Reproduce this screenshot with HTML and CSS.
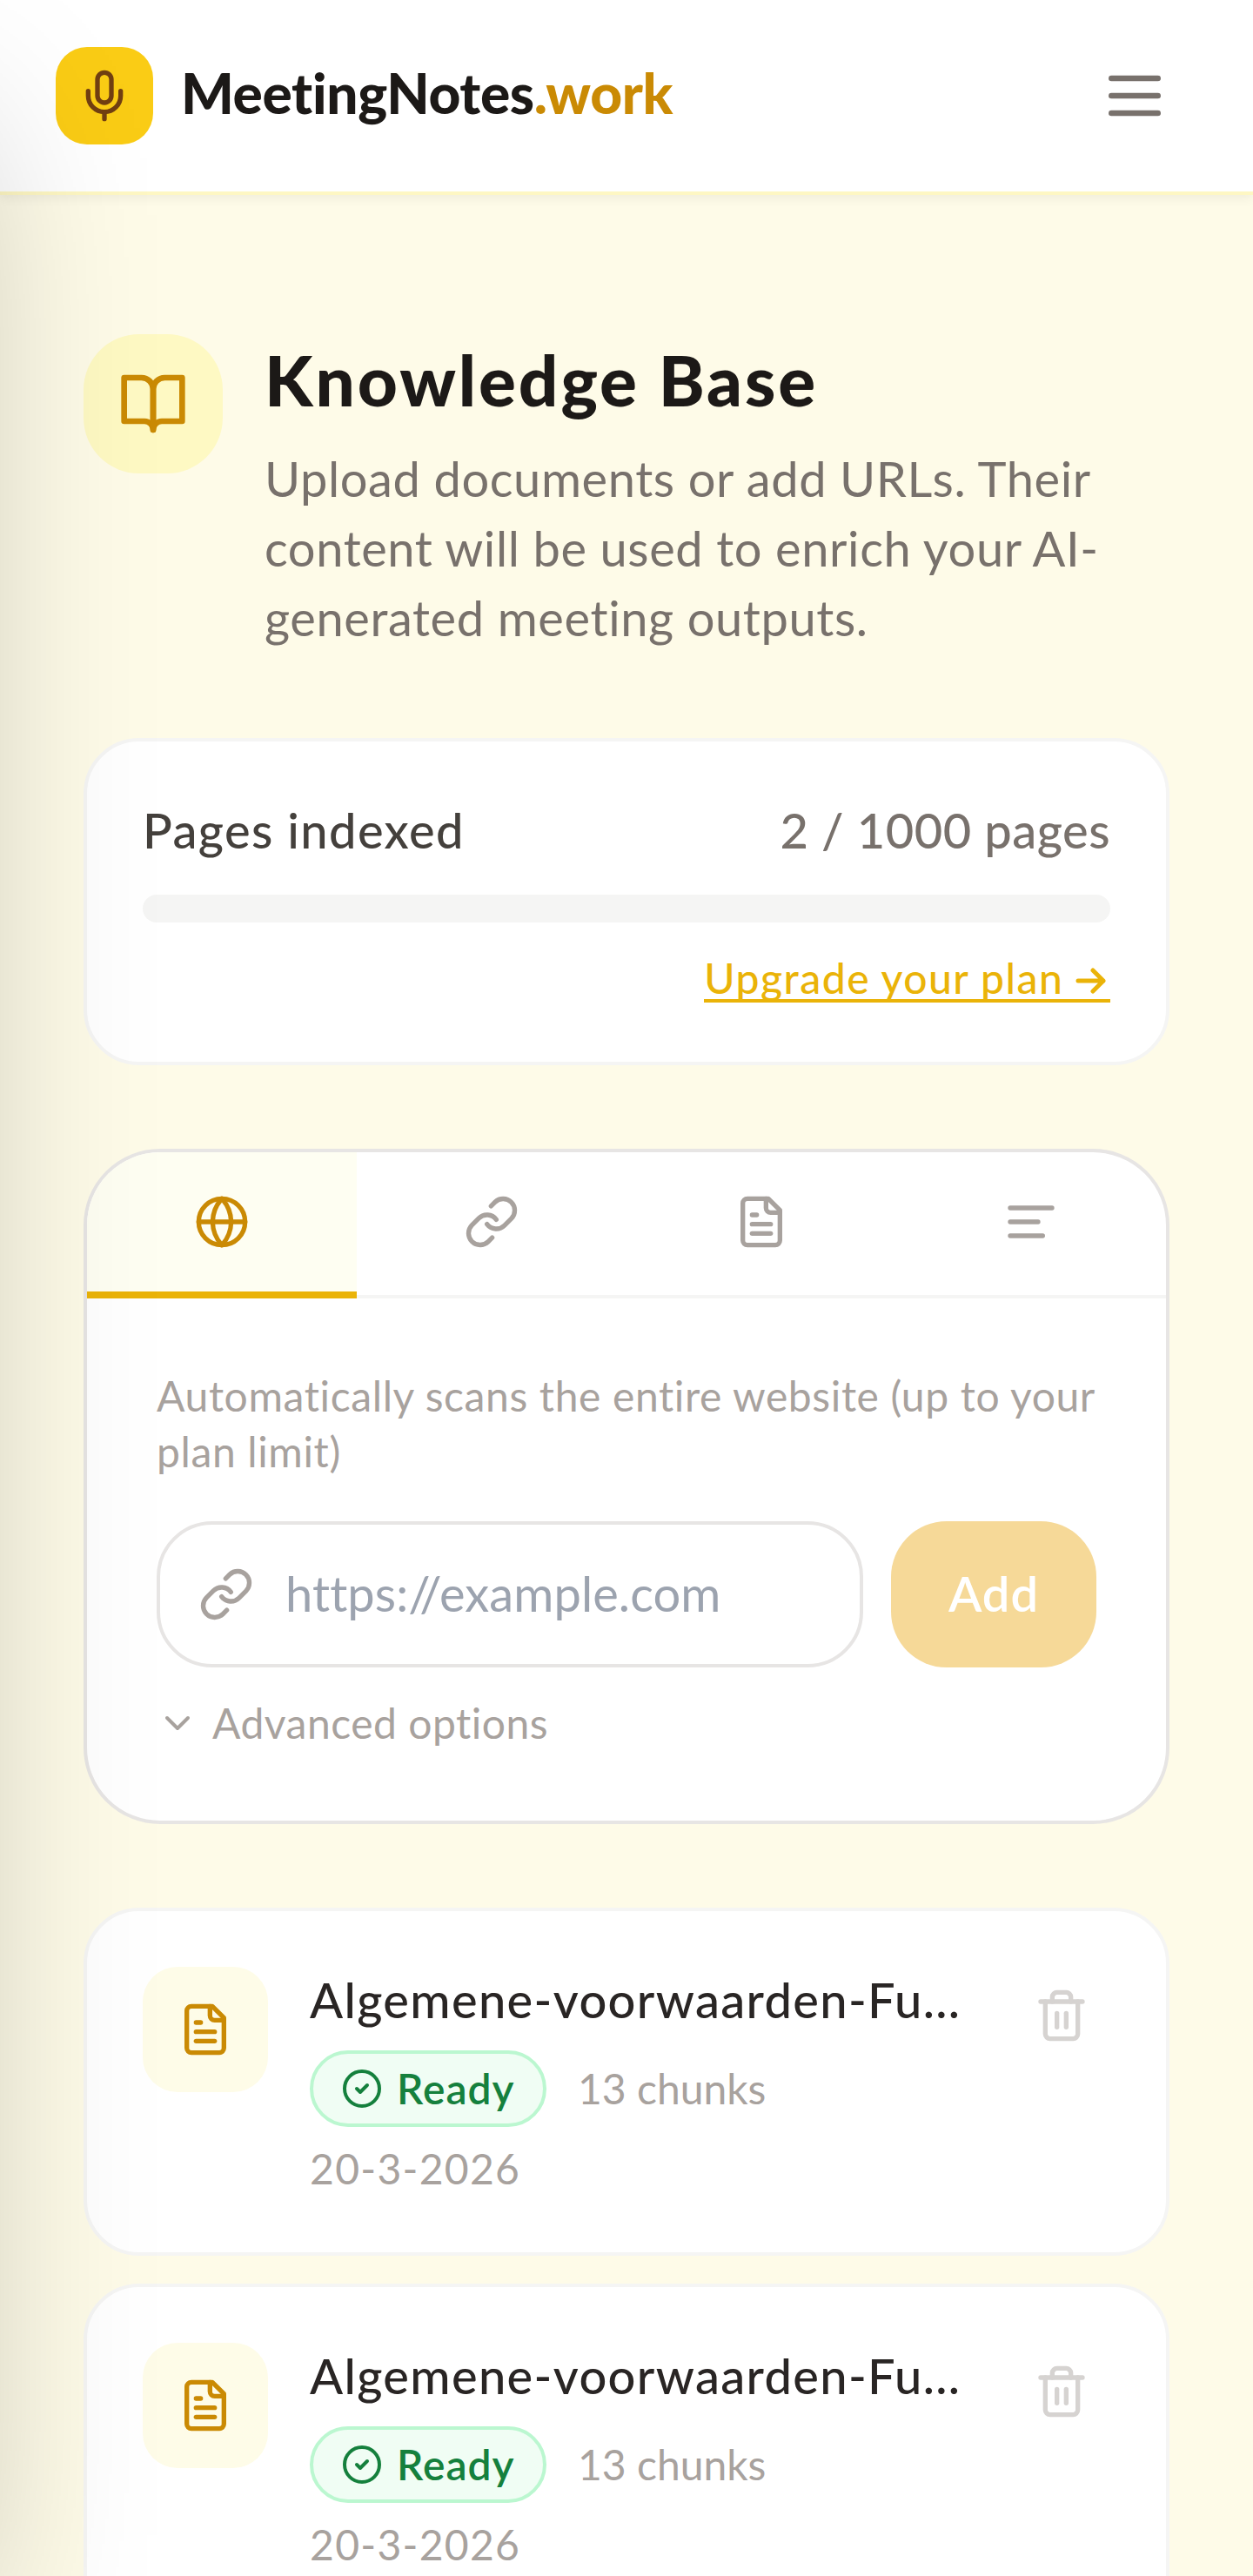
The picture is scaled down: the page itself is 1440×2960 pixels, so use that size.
FILE: index.html
```html
<!DOCTYPE html>
<html lang="en">
<head>
    <meta charset="UTF-8">
    <meta name="viewport" content="width=device-width, initial-scale=1.0">
    <title>Knowledge Base - MeetingNotes.work</title>
    <link rel="stylesheet" href="styles.css">
</head>
<body>
    <!-- shared icons -->
    <svg class="sprite" aria-hidden="true">
        <symbol id="icon-link" viewBox="0 0 24 24">
            <path d="M10 13a5 5 0 0 0 7.54.54l3-3a5 5 0 0 0-7.07-7.07l-1.72 1.71"/>
            <path d="M14 11a5 5 0 0 0-7.54-.54l-3 3a5 5 0 0 0 7.07 7.07l1.71-1.71"/>
        </symbol>
        <symbol id="icon-file" viewBox="0 0 24 24">
            <path d="M15 2H6a2 2 0 0 0-2 2v16a2 2 0 0 0 2 2h12a2 2 0 0 0 2-2V7Z"/>
            <path d="M14 2v4a2 2 0 0 0 2 2h4"/>
            <path d="M10 9H8"/>
            <path d="M16 13H8"/>
            <path d="M16 17H8"/>
        </symbol>
        <symbol id="icon-check" viewBox="0 0 24 24">
            <circle cx="12" cy="12" r="10"/>
            <path d="m9 12 2 2 4-4"/>
        </symbol>
        <symbol id="icon-trash" viewBox="0 0 24 24">
            <path d="M3 6h18"/>
            <path d="M19 6v14c0 1-1 2-2 2H7c-1 0-2-1-2-2V6"/>
            <path d="M8 6V4c0-1 1-2 2-2h4c1 0 2 1 2 2v2"/>
            <path d="M10 11v6"/>
            <path d="M14 11v6"/>
        </symbol>
    </svg>

    <aside class="sidebar"></aside>

    <header class="topbar">
        <a class="brand" href="#">
            <span class="brand-logo">
                <svg class="icon" viewBox="0 0 24 24">
                    <path d="M12 2a3 3 0 0 0-3 3v7a3 3 0 0 0 6 0V5a3 3 0 0 0-3-3Z"/>
                    <path d="M19 10v2a7 7 0 0 1-14 0v-2"/>
                    <path d="M12 19v3"/>
                </svg>
            </span>
            <span class="brand-name">MeetingNotes<span class="brand-tld">.work</span></span>
        </a>
        <button class="menu-btn" aria-label="Menu">
            <svg class="icon icon-lg" viewBox="0 0 24 24">
                <path d="M4 6h16"/>
                <path d="M4 12h16"/>
                <path d="M4 18h16"/>
            </svg>
        </button>
    </header>

    <main>
        <div class="page-head">
            <div class="page-icon">
                <svg class="icon icon-lg" viewBox="0 0 24 24">
                    <path d="M2 3h6a4 4 0 0 1 4 4v14a3 3 0 0 0-3-3H2z"/>
                    <path d="M22 3h-6a4 4 0 0 0-4 4v14a3 3 0 0 1 3-3h7z"/>
                </svg>
            </div>
            <div>
                <h1>Knowledge Base</h1>
                <p class="intro">Upload documents or add URLs. Their<br>content will be used to enrich your AI-<br>generated meeting outputs.</p>
            </div>
        </div>

        <section class="card usage">
            <div class="usage-row">
                <span class="usage-label">Pages indexed</span>
                <span class="usage-count">2 / 1000 pages</span>
            </div>
            <div class="bar"></div>
            <a class="upgrade" href="#">Upgrade your plan <svg class="arrow" viewBox="0 0 36 30"><path d="M3 15h29M20 3l12 12-12 12"/></svg></a>
        </section>

        <section class="panel">
            <div class="tabs">
                <button class="tab active" aria-label="Website">
                    <svg class="icon" viewBox="0 0 24 24">
                        <circle cx="12" cy="12" r="10"/>
                        <path d="M2 12h20"/>
                        <path d="M12 2a15.3 15.3 0 0 1 4 10 15.3 15.3 0 0 1-4 10 15.3 15.3 0 0 1-4-10 15.3 15.3 0 0 1 4-10z"/>
                    </svg>
                </button>
                <button class="tab" aria-label="Link">
                    <svg class="icon"><use href="#icon-link"/></svg>
                </button>
                <button class="tab" aria-label="File">
                    <svg class="icon"><use href="#icon-file"/></svg>
                </button>
                <button class="tab" aria-label="Text">
                    <svg class="icon" viewBox="0 0 24 24">
                        <path d="M21 6H3"/>
                        <path d="M15 12H3"/>
                        <path d="M17 18H3"/>
                    </svg>
                </button>
            </div>
            <div class="panel-body">
                <p class="hint">Automatically scans the entire website (up to your<br>plan limit)</p>
                <div class="url-row">
                    <label class="url-field">
                        <svg class="icon"><use href="#icon-link"/></svg>
                        <input class="url-input" type="url" placeholder="https://example.com">
                    </label>
                    <button class="add-btn">Add</button>
                </div>
                <div class="advanced">
                    <svg class="icon icon-sm" viewBox="0 0 24 24"><path d="m6 9 6 6 6-6"/></svg>
                    <span>Advanced options</span>
                </div>
            </div>
        </section>

        <ul class="docs">
            <li class="card doc">
                <div class="doc-icon"><svg class="icon"><use href="#icon-file"/></svg></div>
                <div class="doc-info">
                    <div class="doc-title">Algemene-voorwaarden-Fu...</div>
                    <div class="doc-meta">
                        <span class="badge"><svg class="icon icon-sm"><use href="#icon-check"/></svg><span>Ready</span></span>
                        <span class="chunks">13 chunks</span>
                    </div>
                    <div class="doc-date">20-3-2026</div>
                </div>
                <button class="trash" aria-label="Delete"><svg class="icon"><use href="#icon-trash"/></svg></button>
            </li>
            <li class="card doc">
                <div class="doc-icon"><svg class="icon"><use href="#icon-file"/></svg></div>
                <div class="doc-info">
                    <div class="doc-title">Algemene-voorwaarden-Fu...</div>
                    <div class="doc-meta">
                        <span class="badge"><svg class="icon icon-sm"><use href="#icon-check"/></svg><span>Ready</span></span>
                        <span class="chunks">13 chunks</span>
                    </div>
                    <div class="doc-date">20-3-2026</div>
                </div>
                <button class="trash" aria-label="Delete"><svg class="icon"><use href="#icon-trash"/></svg></button>
            </li>
        </ul>
    </main>
</body>
</html>
```
FILE: styles.css
```css
* {
    box-sizing: border-box;
}

html {
    overflow: hidden;
}

body {
    margin: 0;
    height: 2960px;
    overflow: hidden;
    background-color: #fefbe8;
    color: #1c1917;
    font-family: 'Lato', 'Open Sans', sans-serif;
    font-size: 56px;
    line-height: 80px;
}

h1, p, ul {
    margin: 0;
    padding: 0;
}

button {
    padding: 0;
    border: 0;
    background: none;
    font-family: inherit;
}

.sprite {
    display: none;
}

.icon {
    display: block;
    flex-shrink: 0;
    width: 64px;
    height: 64px;
    fill: none;
    stroke: currentColor;
    stroke-width: 2;
    stroke-linecap: round;
    stroke-linejoin: round;
}

.icon-lg {
    width: 80px;
    height: 80px;
}

.icon-sm {
    width: 48px;
    height: 48px;
}

/* closed drawer, only its shadow reaches the page */
.sidebar {
    position: fixed;
    top: 0;
    right: 100%;
    width: 1024px;
    height: 100vh;
    z-index: 10;
    box-shadow: 0 100px 200px -48px rgba(0, 0, 0, 0.25);
    pointer-events: none;
}

.topbar {
    display: flex;
    align-items: center;
    justify-content: space-between;
    height: 224px;
    padding: 0 64px;
    background-color: white;
    border-bottom: 4px solid #fef7c3;
    box-shadow: 0 4px 12px rgba(0, 0, 0, 0.06);
}

.brand {
    display: flex;
    align-items: center;
    gap: 32px;
    color: #1c1917;
    text-decoration: none;
}

.brand-logo {
    display: flex;
    align-items: center;
    justify-content: center;
    width: 112px;
    height: 112px;
    border-radius: 36px;
    background-color: #facc15;
    color: #713f12;
}

.brand-name {
    padding-bottom: 6px;
    font-size: 64px;
    font-weight: 900;
    letter-spacing: -0.35px;
}

.brand-tld {
    color: #ca8a04;
}

.menu-btn {
    padding: 32px;
    color: #78716c;
}

main {
    display: flex;
    flex-direction: column;
    padding: 160px 96px 0;
}

.page-head {
    display: flex;
    align-items: flex-start;
    gap: 48px;
    height: 368px;
    margin-bottom: 96px;
}

.page-icon {
    display: flex;
    align-items: center;
    justify-content: center;
    flex-shrink: 0;
    width: 160px;
    height: 160px;
    border-radius: 64px;
    background-color: #fef9c3;
    color: #ca8a04;
}

h1 {
    font-size: 80px;
    font-weight: 900;
    line-height: 104px;
    letter-spacing: 2.9px;
    white-space: nowrap;
}

.intro {
    margin-top: 22px;
    color: #78716c;
    letter-spacing: 0.6px;
    white-space: nowrap;
}

.card {
    border: 4px solid #f5f5f4;
    border-radius: 64px;
    background-color: white;
}

.usage {
    display: flex;
    flex-direction: column;
    height: 376px;
    padding: 62px 64px 64px;
    margin-bottom: 96px;
}

.usage-row {
    display: flex;
    justify-content: space-between;
    font-weight: 500;
}

.usage-label {
    color: #44403c;
    letter-spacing: 1.4px;
}

.usage-count {
    color: #78716c;
    letter-spacing: 0.5px;
}

.bar {
    height: 32px;
    margin-top: 34px;
    border-radius: 16px;
    background-color: #f5f5f4;
}

.upgrade {
    align-self: flex-end;
    margin-top: 32px;
    color: #eab308;
    font-size: 48px;
    font-weight: 500;
    line-height: 64px;
    letter-spacing: 1.5px;
    text-decoration: none;
    background: linear-gradient(#eab308, #eab308) left 0 bottom 4px / 100% 4px no-repeat;
}

.arrow {
    width: 36px;
    height: 30px;
    margin-right: 4px;
    fill: none;
    stroke: currentColor;
    stroke-width: 5;
    stroke-linecap: round;
    stroke-linejoin: round;
}

.panel {
    height: 776px;
    margin-bottom: 96px;
    overflow: hidden;
    border: 4px solid #e7e5e4;
    border-radius: 88px;
    background-color: white;
}

.tabs {
    display: grid;
    grid-template-columns: repeat(4, 1fr);
    height: 168px;
}

.tab {
    display: flex;
    align-items: center;
    justify-content: center;
    padding-bottom: 4px;
    border-bottom: 4px solid #f5f5f4;
    color: #a8a29e;
}

.tab.active {
    padding-bottom: 0;
    border-bottom: 8px solid #eab308;
    background-color: #fefef2;
    color: #ca8a04;
}

.panel-body {
    padding: 80px;
    font-size: 48px;
    line-height: 64px;
    color: #a8a29e;
}

.hint {
    white-space: nowrap;
    letter-spacing: 0.62px;
}

.url-row {
    display: flex;
    gap: 32px;
    margin-top: 48px;
}

.url-field {
    display: flex;
    align-items: center;
    flex: 1;
    gap: 36px;
    min-width: 0;
    height: 168px;
    padding: 0 44px;
    border: 4px solid #e7e5e4;
    border-radius: 64px;
}

.url-input {
    flex: 1;
    min-width: 0;
    padding: 0 0 4px;
    border: 0;
    outline: 0;
    background: none;
    font-family: inherit;
    font-size: 56px;
    letter-spacing: 0.1px;
}

.url-input::placeholder {
    color: #9ca3af;
}

.add-btn {
    flex-shrink: 0;
    width: 236px;
    height: 168px;
    padding-bottom: 4px;
    border-radius: 64px;
    background-color: #f6d998;
    color: white;
    font-size: 56px;
    font-weight: 600;
    letter-spacing: 1px;
}

.advanced {
    display: flex;
    align-items: center;
    gap: 16px;
    margin-top: 32px;
    letter-spacing: 0.5px;
}

.docs {
    display: flex;
    flex-direction: column;
    gap: 32px;
    list-style-type: none;
}

.doc {
    display: flex;
    align-items: flex-start;
    height: 400px;
    padding: 64px;
}

.doc-icon {
    display: flex;
    align-items: center;
    justify-content: center;
    flex-shrink: 0;
    width: 144px;
    height: 144px;
    margin-right: 48px;
    border-radius: 40px;
    background-color: #fefce8;
    color: #ca8a04;
}

.doc-info {
    flex: 1;
    min-width: 0;
    font-size: 48px;
    line-height: 64px;
    color: #a8a29e;
}

.doc-title {
    padding-bottom: 4px;
    color: #292524;
    font-size: 56px;
    font-weight: 500;
    line-height: 76px;
    letter-spacing: 1.35px;
    white-space: nowrap;
}

.doc-meta {
    display: flex;
    align-items: center;
    gap: 36px;
    margin: 16px 0;
}

.badge {
    display: flex;
    align-items: center;
    gap: 16px;
    width: 272px;
    height: 88px;
    padding: 0 32px;
    border: 4px solid #bbf7d0;
    border-radius: 44px;
    background-color: #f0fdf4;
    color: #15803d;
    font-weight: 600;
    letter-spacing: 1px;
}

.doc-date {
    letter-spacing: 1.3px;
}

.trash {
    padding: 24px;
    color: #d6d3d1;
}
```
